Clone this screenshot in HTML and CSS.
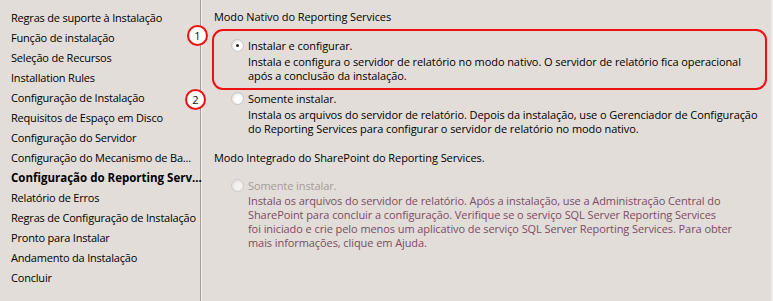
FILE: index.html
```html
<!DOCTYPE html>
<html lang="pt-BR">
<head>
<meta charset="utf-8">
<link rel="stylesheet" href="styles.css">
</head>
<body>
<div class="wrap">
  <ul class="nav">
    <li>Regras de suporte à Instalação</li>
    <li>Função de instalação</li>
    <li>Seleção de Recursos</li>
    <li>Installation Rules</li>
    <li>Configuração de Instalação</li>
    <li>Requisitos de Espaço em Disco</li>
    <li>Configuração do Servidor</li>
    <li>Configuração do Mecanismo de Ba...</li>
    <li class="current">Configuração do Reporting Serv...</li>
    <li>Relatório de Erros</li>
    <li>Regras de Configuração de Instalação</li>
    <li>Pronto para Instalar</li>
    <li>Andamento da Instalação</li>
    <li>Concluir</li>
  </ul>
  <div class="main">
    <div class="section-title">Modo Nativo do Reporting Services</div>
    <div class="option boxed">
      <span class="badge badge-1">1</span>
      <div class="opt-row"><span class="radio checked"></span><span class="opt-label">Instalar e configurar.</span></div>
      <p class="opt-desc">Instala e configura o servidor de relatório no modo nativo. O servidor de relatório fica operacional<br>após a conclusão da instalação.</p>
    </div>
    <div class="option plain">
      <span class="badge badge-2">2</span>
      <div class="opt-row"><span class="radio"></span><span class="opt-label">Somente instalar.</span></div>
      <p class="opt-desc">Instala os arquivos do servidor de relatório. Depois da instalação, use o Gerenciador de Configuração<br>do Reporting Services para configurar o servidor de relatório no modo nativo.</p>
    </div>
    <div class="section-title second">Modo Integrado do SharePoint do Reporting Services.</div>
    <div class="option disabled">
      <div class="opt-row"><span class="radio off"></span><span class="opt-label">Somente instalar.</span></div>
      <p class="opt-desc">Instala os arquivos do servidor de relatório. Após a instalação, use a Administração Central do<br>SharePoint para concluir a configuração. Verifique se o serviço SQL Server Reporting Services<br>foi iniciado e crie pelo menos um aplicativo de serviço SQL Server Reporting Services. Para obter<br>mais informações, clique em Ajuda.</p>
    </div>
  </div>
</div>
</body>
</html>
```

FILE: styles.css
```css
* { box-sizing: border-box; }
html, body { margin: 0; padding: 0; }
body {
  width: 773px;
  height: 301px;
  overflow: hidden;
  background: #e3ddd9;
  font-family: "Open Sans", "Noto Sans", sans-serif;
  font-size: 11px;
  color: #000;
}
.wrap {
  display: flex;
  height: 301px;
  border-right: 2px solid #f0ecea;
}
.nav {
  list-style: none;
  margin: 0;
  padding: 8px 0 0 0;
  width: 201px;
  flex: none;
  border-right: 1px solid #a29d9b;
  box-shadow: 1px 0 0 #f3f0ee;
  letter-spacing: -0.2px;
}
.nav li {
  height: 20px;
  line-height: 20px;
  padding-left: 11px;
  white-space: nowrap;
}
.nav li.current {
  font-weight: bold;
  font-size: 11.5px;
  letter-spacing: 0;
}
.main {
  flex: 1;
  padding: 8px 4px 0 13px;
  letter-spacing: -0.08px;
  white-space: nowrap;
}
.section-title {
  height: 18px;
  line-height: 18px;
}
.section-title.second { margin-top: 13px; }
.option { position: relative; }
.option.boxed {
  margin: 3px 0 0 -2px;
  border: 2px solid #ee1111;
  border-radius: 11px;
  padding: 5px 0 5px 17px;
}
.option.plain { margin-top: -1px; padding: 0 0 0 17px; }
.option.disabled { padding: 9px 0 0 17px; }
.opt-row {
  display: flex;
  align-items: center;
  height: 18px;
}
.opt-label { margin-left: 4px; }
.opt-desc {
  margin: 1px 0 0 17px;
  line-height: 14px;
}
.disabled .opt-label { color: #a39a98; }
.disabled .opt-desc { color: #7b4c62; margin-top: 0; }
.radio {
  width: 13px;
  height: 13px;
  border-radius: 50%;
  background: radial-gradient(circle at 60% 60%, #ffffff 35%, #e6e3e1 75%);
  border: 1px solid #c9c5c3;
  position: relative;
  flex: none;
}
.radio.checked::after {
  content: "";
  position: absolute;
  left: 4px; top: 4px;
  width: 3px; height: 3px;
  border-radius: 50%;
  background: #222;
}
.radio.off {
  background: radial-gradient(circle at 60% 60%, #f4f1ef 35%, #e2dfdd 75%);
  border-color: #cfcac8;
}
.badge {
  position: absolute;
  width: 21px;
  height: 21px;
  border-radius: 50%;
  background: #fff;
  border: 2px solid #ee1111;
  font-size: 11px;
  line-height: 17px;
  text-align: center;
  color: #111;
  letter-spacing: 0;
}
.badge-1 { left: -27px; top: -6px; }
.badge-2 { left: -29px; top: 0; }
```
